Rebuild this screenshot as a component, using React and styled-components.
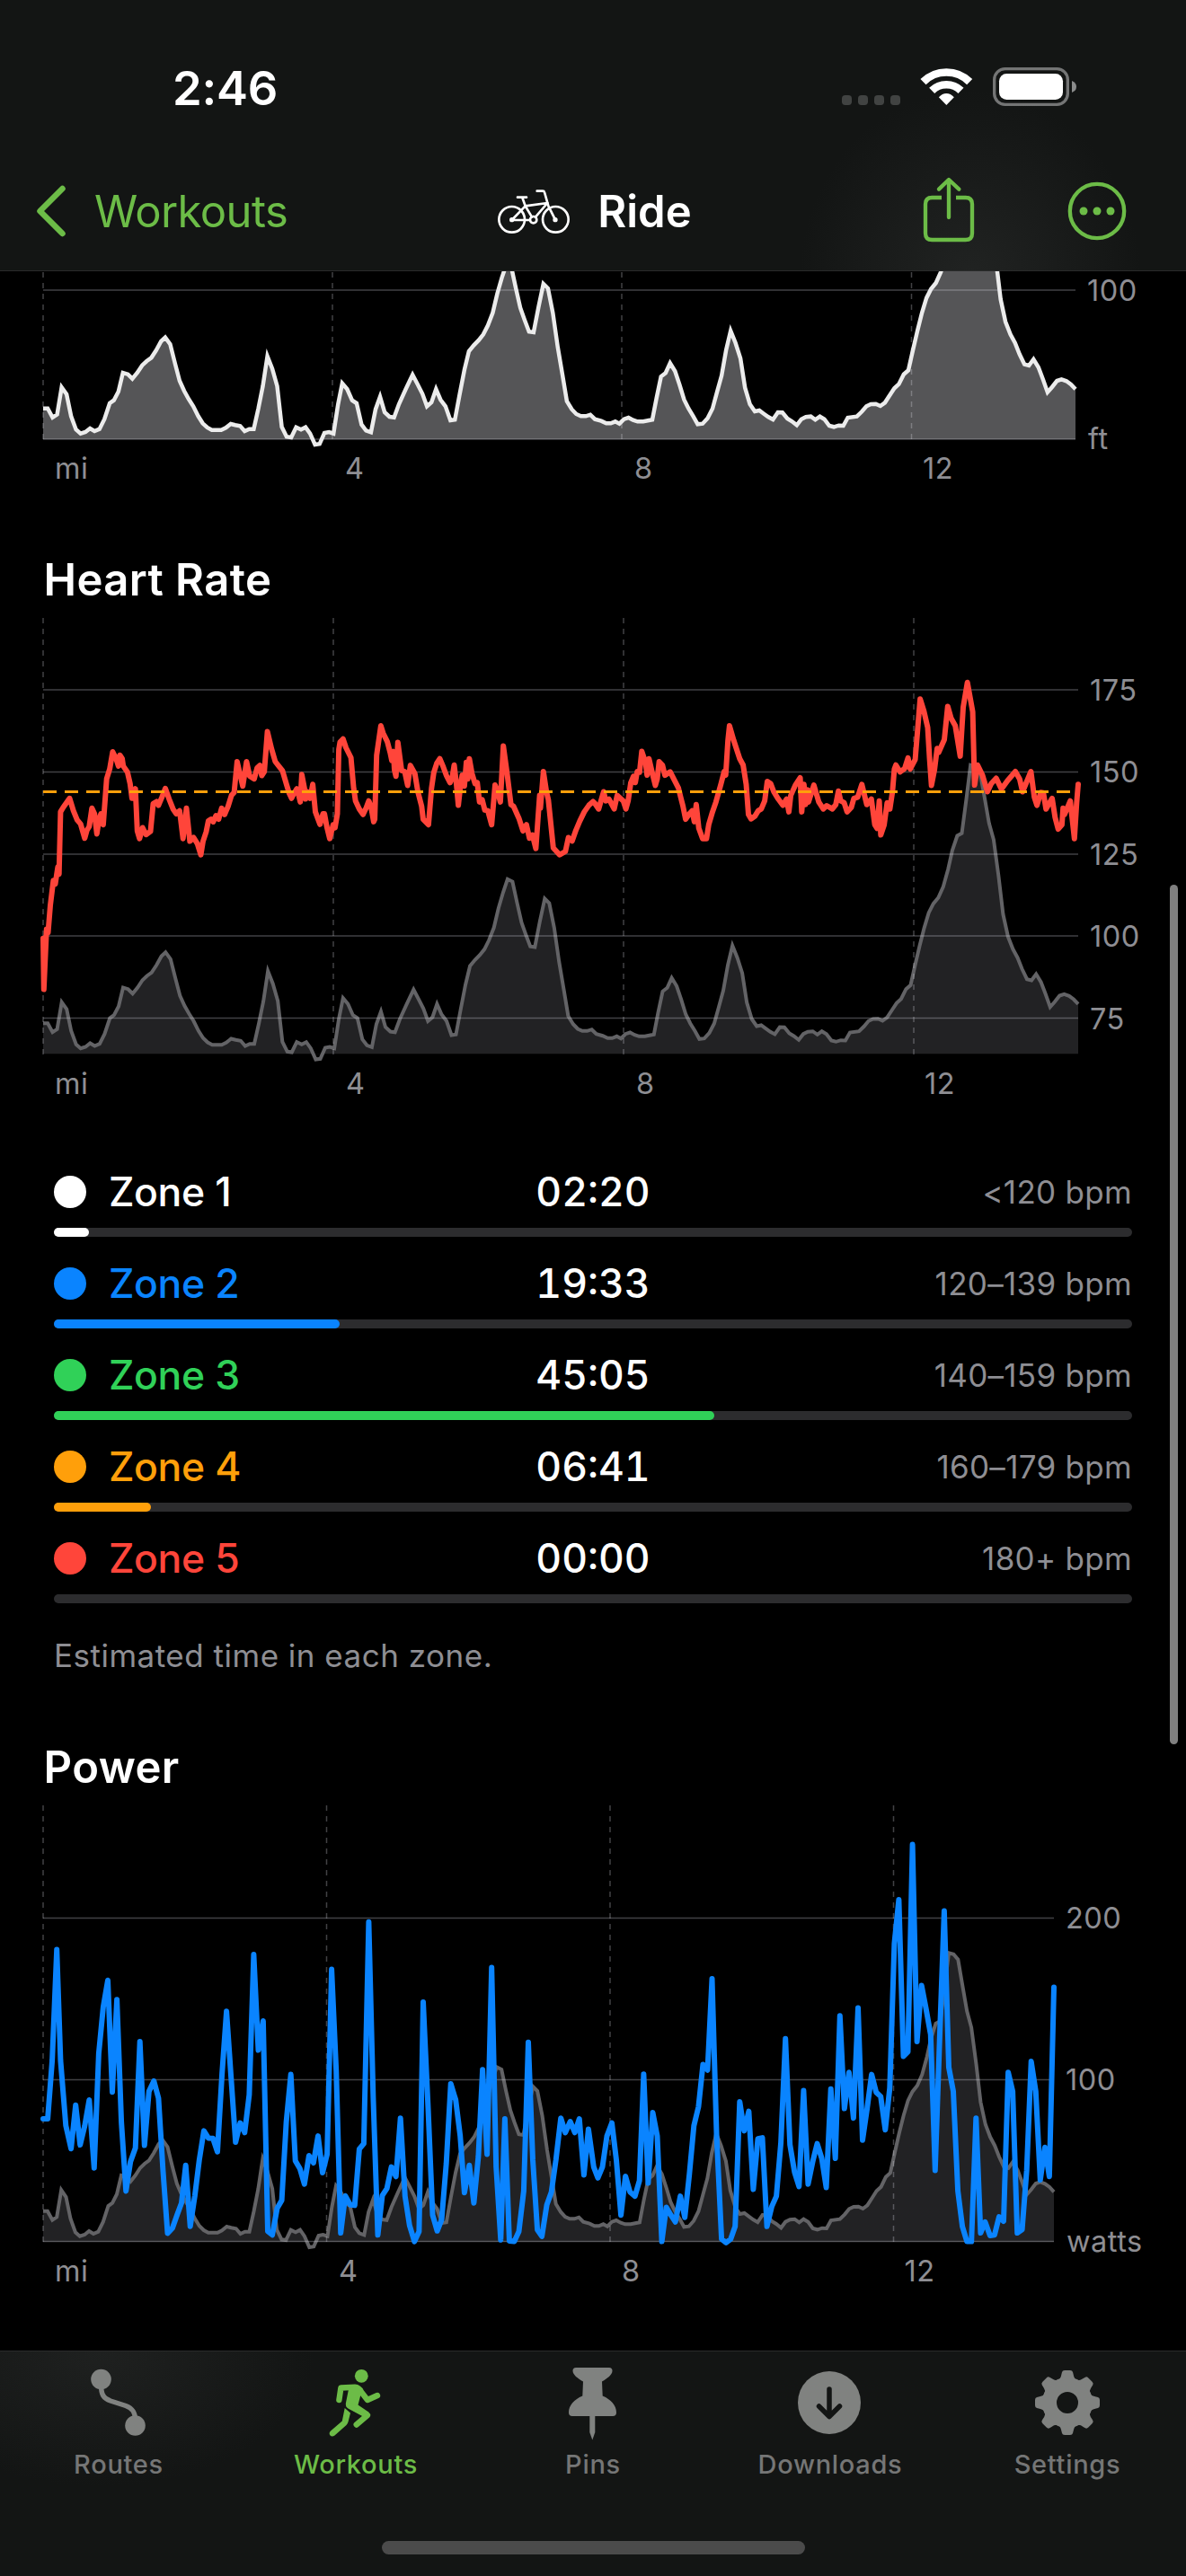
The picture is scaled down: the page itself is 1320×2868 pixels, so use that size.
import React from 'react'
import styled, { createGlobalStyle } from 'styled-components'

const GlobalStyle = createGlobalStyle`
  * {
    box-sizing: border-box;
  }

  body {
    margin: 0;
    background: #000;
  }
`

const GREEN = '#6cbc47'
const GREY = '#8e8e93'

const ELEVATION = `
114,494 126,494 139,524 151,514 163,424 176,447 188,520 201,565 213,578 226,573 238,561 250,570 263,563
276,530 290,477 301,467 313,438 325,375 338,380 350,395 363,375 376,350 388,336 400,325 413,300 426,270
437,257 450,280 463,345 475,402 487,436 499,463 511,487 524,520 536,544 548,558 560,566 585,566 597,559
610,546 622,550 635,553 647,570 659,563 671,563 683,495 695,420 707,320 720,362 733,420 745,556 758,589
770,591 783,557 796,565 808,557 820,578 833,615 845,613 858,576 870,573 882,578 894,480 905,410 918,430
931,467 943,477 956,548 968,568 981,574 993,497 1005,455 1017,507 1030,522 1042,524 1055,480 1073,430
1091,382 1104,413 1117,445 1129,487 1141,474 1153,430 1165,465 1178,487 1191,534 1203,532 1215,450
1228,365 1240,303 1253,283 1266,266 1278,247 1290,217 1303,175 1315,110 1327,58 1339,13 1352,21 1364,92
1376,158 1387,198 1399,238 1411,240 1424,155 1437,78 1449,93 1462,175 1475,290 1487,380 1499,470
1512,497 1524,513 1536,520 1549,520 1561,515 1573,530 1590,536 1603,544 1615,544 1627,538 1638,545
1650,530 1662,525 1674,533 1686,538 1701,538 1725,532 1736,460 1748,388 1760,376 1772,343 1785,370
1797,415 1809,465 1821,495 1833,520 1845,547 1858,545 1871,527 1884,495 1896,440 1908,385 1920,300
1932,235 1945,275 1958,327 1970,425 1983,480 1996,504 2008,501 2020,512 2032,523 2044,531 2057,507
2069,508 2082,528 2094,537 2107,550 2119,530 2131,523 2144,521 2156,532 2168,521 2180,530 2193,552
2205,556 2218,551 2230,552 2242,525 2266,521 2279,505 2291,487 2303,480 2316,479 2328,486 2340,475
2353,450 2365,427 2377,413 2390,380 2402,367 2414,300 2426,235 2438,175 2450,125 2462,95 2475,75
2488,38 2501,-21 2512,-83 2525,-132 2537,-140 2549,-254 2560,-368 2573,-364 2585,-346 2597,-260
2609,-174 2621,-119 2634,3 2646,130 2659,205 2672,247 2684,275 2696,313 2709,347 2721,351 2733,330
2746,357 2758,397 2770,440 2782,423 2795,402 2807,397 2820,403 2832,414 2844,430`

const HEART_RATE = `
114,1090 116,1229 123,1065 127,1075 133,1000 141,932 146,942 153,895 156,915 160,745 167,733 184,708
194,742 204,767 213,778 224,817 230,795 236,785 243,735 250,750 256,805 262,765 267,750 273,780 282,655
290,628 298,581 307,600 313,620 317,590 323,600 326,620 337,637 344,668 349,708 358,682 363,797 369,818
377,788 386,807 398,798 405,723 414,717 419,727 428,705 437,681 447,710 458,738 466,750 475,742 484,818
493,735 502,825 512,815 522,832 531,862 537,825 545,800 551,770 558,765 564,772 571,755 578,765 586,735
594,752 603,730 612,700 619,692 627,608 634,640 642,675 652,608 660,647 672,655 680,625 687,618 692,646
699,635 707,526 718,573 728,608 747,633 758,672 765,695 771,708 777,695 785,682 790,700 794,718 798,643
805,680 808,710 812,690 820,708 827,670 834,745 846,779 854,750 858,750 864,785 872,818 881,780 886,788
892,750 896,575 899,555 907,546 915,570 928,597 935,680 940,715 950,737 960,752 968,735 975,715 981,730
988,772 991,765 996,590 1007,510 1013,530 1024,553 1032,585 1036,605 1040,580 1043,630 1047,648
1052,555 1062,632 1070,635 1078,673 1085,618 1097,640 1105,690 1115,730 1119,765 1133,780 1141,680
1147,638 1155,612 1163,600 1172,622 1180,645 1190,665 1196,650 1201,617 1207,670 1212,727 1218,670
1222,645 1228,675 1233,610 1237,655 1241,600 1248,640 1256,668 1262,665 1268,718 1275,712 1282,740
1290,742 1300,780 1309,672 1316,690 1323,718 1331,565 1341,640 1351,725 1358,730 1372,762 1383,797
1392,780 1400,817 1408,808 1417,845 1427,700 1429,735 1437,635 1445,690 1450,712 1463,843 1480,862
1495,853 1503,815 1513,824 1523,795 1533,770 1545,745 1557,727 1568,717 1573,722 1583,737 1596,690
1602,715 1610,710 1624,737 1632,700 1648,715 1655,737 1661,715 1668,665 1675,648 1680,665 1685,635
1691,637 1697,580 1702,595 1707,610 1711,645 1716,600 1725,640 1733,673 1738,655 1743,608 1752,618
1758,645 1772,636 1783,658 1794,680 1800,705 1806,730 1813,765 1823,750 1830,742 1836,772 1841,725
1848,790 1858,818 1868,818 1874,780 1884,745 1893,718 1906,670 1915,635 1919,645 1925,550 1929,510
1940,550 1956,600 1965,617 1973,670 1979,752 1986,764 1996,757 2005,742 2013,737 2022,715 2029,662
2038,668 2046,690 2058,710 2070,727 2080,710 2086,745 2091,700 2103,672 2116,652 2120,745 2126,670
2130,725 2136,685 2138,718 2152,672 2165,718 2177,737 2186,728 2201,737 2210,725 2217,688 2223,715
2232,720 2240,745 2251,733 2258,708 2268,705 2279,670 2292,725 2304,710 2313,780 2319,790 2325,715
2329,808 2338,780 2346,720 2353,737 2360,690 2365,628 2369,617 2380,636 2392,627 2401,598 2407,628
2420,602 2433,437 2443,470 2453,515 2458,600 2463,673 2471,630 2478,572 2482,583 2497,548 2506,457
2515,490 2526,510 2539,593 2547,460 2558,392 2572,472 2577,672 2585,617 2598,645 2611,690 2621,668
2634,653 2648,683 2664,660 2685,635 2696,655 2704,690 2726,635 2735,705 2742,727 2752,692 2759,693
2766,737 2782,708 2790,760 2798,792 2808,780 2811,735 2815,752 2830,715 2841,818 2847,720 2851,670`

const POWER = `
114,990 126,990 138,820 150,497 160,820 174,1010 188,1077 200,950 212,1066 224,1010 236,935 249,1133
261,800 273,665 285,587 297,912 309,643 321,1000 333,1200 345,1115 358,1075 370,765 382,1067 394,910
407,880 419,930 431,1140 443,1323 456,1308 468,1270 480,1235 491,1125 503,1303 515,1215 527,1110
539,1025 551,1046 563,1047 575,1086 587,860 599,677 611,870 623,1058 635,1002 647,1030 659,920 671,512
683,790 696,705 708,1317 720,1328 733,1250 745,1227 757,1000 769,861 781,1112 793,1135 805,1180
817,1097 829,1118 841,1040 853,1147 865,1093 877,555 889,850 901,1322 913,1214 926,1240 938,1242
950,1078 962,1062 975,417 987,930 999,1328 1011,1213 1023,1193 1035,1130 1047,1158 1059,988 1071,1215
1083,1300 1096,1347 1108,1318 1119,650 1132,960 1144,1270 1156,1316 1168,1283 1180,1120 1192,888
1205,935 1217,1040 1228,1205 1241,1125 1253,1235 1265,1100 1276,847 1288,1093 1300,550 1312,1130
1324,1342 1335,990 1347,1345 1360,1347 1372,1318 1385,1200 1397,767 1409,1110 1421,1313 1433,1332
1446,1240 1458,1203 1470,1110 1483,988 1495,1030 1508,998 1520,1030 1532,990 1544,1153 1556,1020
1570,1130 1581,1162 1593,1130 1605,1040 1618,1002 1630,1110 1642,1270 1654,1157 1666,1203 1679,1215
1691,1170 1702,860 1714,1177 1726,972 1738,1040 1750,1347 1762,1247 1774,1270 1786,1290 1799,1215
1811,1277 1823,1150 1835,1010 1847,955 1859,832 1871,848 1883,582 1895,1040 1908,1340 1920,1350
1932,1340 1944,1303 1956,940 1968,1025 1980,968 1992,1195 2004,1048 2016,1045 2028,1303 2041,1245
2053,1215 2065,1060 2077,757 2089,1065 2101,1145 2113,1187 2125,908 2137,1180 2149,1115 2161,1062
2173,1105 2185,1190 2197,903 2209,1105 2221,690 2233,960 2245,855 2257,988 2269,667 2281,1052 2293,960
2305,861 2317,913 2329,925 2341,1022 2353,900 2365,480 2377,352 2389,808 2401,795 2413,192 2425,765
2437,602 2449,670 2461,745 2473,1140 2485,750 2497,385 2509,840 2521,910 2533,1200 2545,1303 2557,1347
2569,1347 2581,988 2593,1322 2605,1290 2618,1330 2630,1328 2642,1275 2654,1288 2666,855 2678,910
2690,1322 2703,1312 2715,1140 2727,823 2739,910 2751,1168 2763,1073 2775,1158 2787,607`

const LEFT = 48

// Turns a sample list into polyline points: `right` is the pixel of the last
// sample, `zero` the sample value that falls on pixel `base`.
const plot = (samples, { right, base, zero, unit }) => {
  const pairs = samples.trim().split(/\s+/).map((p) => p.split(',').map(Number))
  const first = pairs[0][0]
  const last = pairs[pairs.length - 1][0]
  return pairs
    .map(([x, y]) => {
      const px = LEFT + ((x - first) * (right - LEFT)) / (last - first)
      const py = base + (y - zero) / unit
      return `${px.toFixed(1)},${py.toFixed(1)}`
    })
    .join(' ')
}

const Screen = styled.div`
  position: relative;
  display: flex;
  flex-direction: column;
  width: 1320px;
  height: 2868px;
  overflow: hidden;
  background: #000;
  color: #fff;
  font-family: Inter, 'Liberation Sans', sans-serif;
`

const Header = styled.header`
  flex: none;
  height: 302px;
  border-bottom: 1px solid #2a2b2b;
  background: radial-gradient(ellipse 190px 210px at 1080px 310px, #212322, rgba(33, 35, 34, 0)), #131514;
`

const StatusBar = styled.div`
  display: flex;
  align-items: center;
  justify-content: space-between;
  height: 196px;
  padding: 0 121px 0 192px;
`

const Time = styled.div`
  font-size: 52.5px;
  font-weight: 600;
  letter-spacing: -0.2px;
`

const StatusIcons = styled.div`
  display: flex;
  align-items: flex-start;
  height: 46px;
`

const NavBar = styled.nav`
  display: grid;
  grid-template-columns: 1fr auto 1fr;
  align-items: center;
  height: 78px;
  padding: 0 66px 0 38px;
`

const Back = styled.a`
  display: flex;
  align-items: center;
  gap: 31px;
  color: ${GREEN};
  font-size: 49px;
  letter-spacing: -0.6px;
`

const NavTitle = styled.h1`
  display: flex;
  align-items: center;
  gap: 28px;
  margin: 0 0 0 31px;
  font-size: 49px;
  font-weight: 600;
`

const Actions = styled.div`
  display: flex;
  align-items: center;
  justify-content: flex-end;
  gap: 102px;
`

const Content = styled.main`
  flex: 1;
  min-height: 0;
`

const SectionTitle = styled.h2`
  height: 60px;
  margin: 0;
  padding-left: 48.5px;
  font-size: 49px;
  line-height: 60px;
  font-weight: 600;
  letter-spacing: 0.4px;
`

const Plot = styled.svg`
  display: block;
`

const Label = styled.text`
  fill: ${GREY};
  font-size: 32.5px;
  letter-spacing: 0.5px;
`

const Zones = styled.section`
  display: flex;
  flex-direction: column;
  padding: 0 60px;
`

const Zone = styled.div`
  height: 102px;
`

const ZoneRow = styled.div`
  display: grid;
  grid-template-columns: 1fr auto 1fr;
  align-items: center;
  height: 80px;
`

const ZoneName = styled.div`
  display: flex;
  align-items: center;
  gap: 25px;
  color: ${({ $color }) => $color};
  font-size: 44.5px;
  font-weight: 500;
  letter-spacing: -0.4px;
`

const Dot = styled.span`
  width: 36px;
  height: 36px;
  border-radius: 50%;
  background: ${({ $color }) => $color};
`

const ZoneTime = styled.div`
  font-size: 44.5px;
  font-weight: 500;
  font-variant-numeric: tabular-nums;
`

const ZoneRange = styled.div`
  color: ${GREY};
  font-size: 35px;
  letter-spacing: 0.3px;
  text-align: right;
`

const Track = styled.div`
  height: 10px;
  border-radius: 5px;
  background: #2c2c2e;
`

const Fill = styled.div`
  height: 10px;
  border-radius: 5px;
  background: ${({ $color }) => $color};
`

const Note = styled.p`
  margin: 16px 0 0;
  height: 60px;
  color: ${GREY};
  font-size: 35px;
  line-height: 60px;
  letter-spacing: 0.5px;
`

const ScrollThumb = styled.div`
  position: absolute;
  top: 985px;
  right: 9px;
  width: 9px;
  height: 957px;
  border-radius: 5px;
  background: #808080;
`

const PowerWrap = styled.section`
  padding-top: 65px;
`

const TabBar = styled.footer`
  flex: none;
  display: flex;
  flex-direction: column;
  align-items: center;
  justify-content: space-between;
  height: 251px;
  padding-bottom: 24px;
  border-top: 1px solid #2a2b2b;
  background: radial-gradient(ellipse 240px 150px at 110px 0, #1f2120, rgba(31, 33, 32, 0)), #131514;
`

const Tabs = styled.div`
  display: grid;
  grid-template-columns: repeat(5, 1fr);
  width: 100%;
`

const Tab = styled.div`
  display: flex;
  flex-direction: column;
  align-items: center;
  padding-top: 12px;
  color: ${({ $active }) => ($active ? GREEN : '#808280')};
`

const TabLabel = styled.span`
  margin-top: 6px;
  color: ${({ $active }) => ($active ? GREEN : '#757676')};
  font-size: 29px;
  line-height: 36px;
  font-weight: 500;
  letter-spacing: 0.7px;
`

const HomeIndicator = styled.div`
  width: 471px;
  height: 15px;
  border-radius: 8px;
  background: #4b4b4b;
`

const SignalDots = () => (
  <svg width='76' height='46' viewBox='111 75 228 138'>
    {[111, 165, 219, 273].map((x) => (
      <rect key={x} x={x} y='168' width='33' height='33' rx='11' fill='#414342' />
    ))}
  </svg>
)

const Wifi = () => (
  <svg width='92' height='46' viewBox='339 75 276 138' fill='none' stroke='#fff' strokeWidth='26'>
    <path d='M382.5 123.500 A110 110 0 0 1 537.500 123.500' />
    <path d='M411.500 152.500 A69.500 69.500 0 0 1 508.500 152.500' />
    <path d='M460 201 L434.500 175 Q446 162 460 162 Q474 162 485.500 175 Z' fill='#fff' stroke='none' />
  </svg>
)

const Battery = () => (
  <svg width='94' height='46' viewBox='615 75 282 138'>
    <rect x='620' y='80' width='245' height='119' rx='36' fill='none' stroke='#747575' strokeWidth='10' />
    <rect x='636' y='96' width='213' height='87' rx='25' fill='#fff' />
    <path d='M879 120 Q894 126 894 139.500 Q894 153 879 159 Z' fill='#8b8c8c' />
  </svg>
)

const Chevron = () => (
  <svg width='36' height='60' viewBox='0 0 36 60' fill='none' stroke={GREEN} strokeWidth='6.500' strokeLinecap='round' strokeLinejoin='round'>
    <path d='M31.500 5 L6.500 30 L31.500 55' />
  </svg>
)

const Bike = () => (
  <svg width='84' height='54' viewBox='27 42 252 162' fill='none' stroke='#fff' strokeWidth='8' strokeLinecap='round' strokeLinejoin='round'>
    <circle cx='77' cy='151' r='43' />
    <circle cx='223' cy='151' r='43' />
    <circle cx='149' cy='152' r='11' />
    <circle cx='77' cy='152' r='5' fill='#fff' strokeWidth='6' />
    <circle cx='222' cy='152' r='5' fill='#fff' strokeWidth='6' />
    <path d='M96 77 H126 M112 78 L122 106 L144 143 M137 153 H77 L122 106 L196 96 L156 143' />
    <path d='M161 56 H180 Q185 56 186 60 L199 106 L222 152' />
  </svg>
)

const Share = () => (
  <svg width='60' height='78' viewBox='378 438 180 234' fill='none' stroke={GREEN} strokeWidth='13' strokeLinecap='round' strokeLinejoin='round'>
    <path d='M444 510 H412 Q390 510 390 532 V629 Q390 651 412 651 H524 Q546 651 546 629 V532 Q546 510 524 510 H492' strokeLinecap='butt' />
    <path d='M468 452 V576 M435 482 L468 450 L502 482' />
  </svg>
)

const More = () => (
  <svg width='66' height='66' viewBox='865 454 198 198' fill={GREEN}>
    <circle cx='964' cy='553' r='90.500' fill='none' stroke={GREEN} strokeWidth='13' />
    <circle cx='919' cy='553' r='13.500' />
    <circle cx='964' cy='553' r='13.500' />
    <circle cx='1009' cy='553' r='13.500' />
  </svg>
)

const RouteIcon = () => (
  <svg width='80' height='90' viewBox='0 0 80 90' fill='currentColor'>
    <circle cx='20.500' cy='19' r='11.300' />
    <circle cx='58.500' cy='70.500' r='11.300' />
    <path d='M20.500 25 C20.500 36 23 40 31 43 L48 48.500 C56 51.500 58.500 56 58.500 64' fill='none' stroke='currentColor' strokeWidth='5.500' />
  </svg>
)

const RunnerIcon = () => (
  <svg width='72' height='90' viewBox='0 0 72 90' fill='none' stroke='currentColor' strokeWidth='6.400' strokeLinecap='round' strokeLinejoin='round'>
    <circle cx='42.300' cy='15.300' r='7.400' fill='currentColor' stroke='none' />
    <path d='M17.400 42 L19.400 28.500 L35 27.800 Q39.500 28 42 33 L49 42 L60 37' />
    <path d='M28 30 L38 26 L43 32 L41 38 L38.500 47.500 L51 56 L46 61.500 L27.500 51.500 Q24 48.500 25 45 Z' fill='currentColor' stroke='none' />
    <path d='M28.500 48 L49 59 L36.700 69.500' />
    <path d='M23.700 51 L30 56.500 L27.500 66.500 Q27 68 25.500 70 L12.500 81.500 Q9.500 83.500 7.500 81.500 Q5.500 79 8 76.500 L20.800 65.500 Z' fill='currentColor' stroke='none' />
  </svg>
)

const PinIcon = () => (
  <svg width='80' height='90' viewBox='0 0 80 90' fill='currentColor'>
    <path d='M21 6 H58 Q61.500 6 61.500 9.500 C61.500 14 56 18 50 21.500 L50.700 37.500 C60 41.500 66 48 66 56 Q66 60 62 60 H17 Q13 60 13 56 C13 48 19 41.500 28.300 37.500 L29 21.500 C23 18 17.500 14 17.500 9.500 Q17.500 6 21 6 Z' />
    <path d='M36.300 59 H42.300 V78 L39.300 86.500 L36.300 78 Z' />
  </svg>
)

const DownloadIcon = () => (
  <svg width='80' height='90' viewBox='0 0 80 90'>
    <circle cx='39' cy='45' r='35' fill='currentColor' />
    <path d='M39 30 V60 M27.500 49 L39 60.500 L50.500 49' fill='none' stroke='#131514' strokeWidth='5.500' strokeLinecap='round' strokeLinejoin='round' />
  </svg>
)

const GearIcon = () => (
  <svg width='80' height='90' viewBox='0 0 80 90' fill='currentColor'>
    <circle cx='40' cy='45' r='20' fill='none' stroke='currentColor' strokeWidth='16' />
    {[0, 45, 90, 135, 180, 225, 270, 315].map((angle) => (
      <path
        key={angle}
        d='M29 20 Q32.500 19 33.500 13 L34 11 Q34.500 9 37 9 H43 Q45.500 9 46 11 L46.500 13 Q47.500 19 51 20 Z'
        transform={`rotate(${angle} 40 45)`}
      />
    ))}
  </svg>
)

const Grid = ({ rows, columns, right, top, bottom }) => (
  <g stroke='#ebebf5' strokeOpacity='0.28'>
    {rows.map((y) => (
      <line key={y} x1={LEFT} x2={right} y1={y} y2={y} strokeWidth='1.500' />
    ))}
    {columns.map((x) => (
      <line key={x} x1={x} x2={x} y1={top} y2={bottom} strokeWidth='1.500' strokeDasharray='6 6' />
    ))}
  </g>
)

const Elevation = ({ right, base, stroke, fill, width }) => {
  const points = plot(ELEVATION, { right, base, zero: 597, unit: 3 })
  const id = `area-${right}`
  return (
    <g>
      <clipPath id={id}>
        <rect x={LEFT} y={base - 400} width={right - LEFT} height='400' />
      </clipPath>
      <polygon points={`${LEFT},${base} ${points} ${right},${base}`} fill={fill} clipPath={`url(#${id})`} />
      <polyline points={points} fill='none' stroke={stroke} strokeWidth={width} />
    </g>
  )
}

const MileLabels = ({ xs, y }) => (
  <>
    {['mi', '4', '8', '12'].map((mile, i) => (
      <Label key={mile} x={xs[i]} y={y}>{mile}</Label>
    ))}
  </>
)

const ElevationChart = () => (
  <Plot width='1320' height='314' viewBox='0 302 1320 314'>
    <Elevation right={1197} base={489} stroke='#ececec' fill='#555557' width={4.5} />
    <Grid rows={[323, 489]} columns={[48, 370, 692, 1014.5]} right={1197} top={303} bottom={489} />
    <Label x='1210' y='335'>100</Label>
    <Label x='1211' y='500'>ft</Label>
    <MileLabels xs={[61, 384, 706, 1027]} y={533} />
  </Plot>
)

const HeartRateChart = () => (
  <Plot width='1320' height='611' viewBox='0 676 1320 611'>
    <Elevation right={1200} base={1173.5} stroke='#636366' fill='#222224' width={4} />
    <Grid
      rows={[768, 859.5, 951, 1042, 1133.5]}
      columns={[48, 371, 694, 1017]}
      right={1200}
      top={688}
      bottom={1174}
    />
    <polyline
      points={plot(HEART_RATE, { right: 1200, base: 768, zero: 412, unit: 2.45 })}
      fill='none'
      stroke='#ff453a'
      strokeWidth='6'
      strokeLinecap='round'
      strokeLinejoin='round'
    />
    <line x1={LEFT} x2='1200' y1='881.500' y2='881.500' stroke='#ff9f0a' strokeWidth='3' strokeDasharray='15 9' />
    {[175, 150, 125, 100, 75].map((bpm, i) => (
      <Label key={bpm} x='1213' y={780 + i * 91.4}>{bpm}</Label>
    ))}
    <MileLabels xs={[61, 385, 708, 1029]} y={1217.5} />
  </Plot>
)

const PowerChart = () => (
  <Plot width='1320' height='600' viewBox='0 1998 1320 600'>
    <Elevation right={1173} base={2496} stroke='#636366' fill='#222224' width={4} />
    <Grid
      rows={[2135.5, 2315.5, 2495.5]}
      columns={[48, 363.5, 679, 994.5]}
      right={1173}
      top={2010}
      bottom={2496}
    />
    <polyline
      points={plot(POWER, { right: 1173, base: 2496, zero: 1348, unit: 2.6133 })}
      fill='none'
      stroke='#0a84ff'
      strokeWidth='6'
      strokeLinecap='round'
      strokeLinejoin='round'
    />
    <Label x='1186' y='2147'>200</Label>
    <Label x='1186' y='2327'>100</Label>
    <Label x='1187' y='2507'>watts</Label>
    <MileLabels xs={[61, 377, 692, 1006.5]} y={2540} />
  </Plot>
)

const ZONES = [
  { name: 'Zone 1', time: '02:20', range: '<120 bpm', color: '#ffffff', width: 39 },
  { name: 'Zone 2', time: '19:33', range: '120–139 bpm', color: '#0a84ff', width: 318 },
  { name: 'Zone 3', time: '45:05', range: '140–159 bpm', color: '#30d158', width: 735 },
  { name: 'Zone 4', time: '06:41', range: '160–179 bpm', color: '#ff9f0a', width: 108 },
  { name: 'Zone 5', time: '00:00', range: '180+ bpm', color: '#ff453a', width: 0 }
]

const TABS = [
  { name: 'Routes', Icon: RouteIcon },
  { name: 'Workouts', Icon: RunnerIcon, active: true },
  { name: 'Pins', Icon: PinIcon },
  { name: 'Downloads', Icon: DownloadIcon },
  { name: 'Settings', Icon: GearIcon }
]

const App = () => (
  <Screen>
    <GlobalStyle />
    <Header>
      <StatusBar>
        <Time>2:46</Time>
        <StatusIcons>
          <SignalDots />
          <Wifi />
          <Battery />
        </StatusIcons>
      </StatusBar>
      <NavBar>
        <Back>
          <Chevron />
          Workouts
        </Back>
        <NavTitle>
          <Bike />
          Ride
        </NavTitle>
        <Actions>
          <Share />
          <More />
        </Actions>
      </NavBar>
    </Header>

    <Content>
      <ElevationChart />
      <SectionTitle>Heart Rate</SectionTitle>
      <HeartRateChart />
      <Zones>
        {ZONES.map(({ name, time, range, color, width }) => (
          <Zone key={name}>
            <ZoneRow>
              <ZoneName $color={color}>
                <Dot $color={color} />
                {name}
              </ZoneName>
              <ZoneTime>{time}</ZoneTime>
              <ZoneRange>{range}</ZoneRange>
            </ZoneRow>
            <Track>
              <Fill $color={color} style={{ width }} />
            </Track>
          </Zone>
        ))}
        <Note>Estimated time in each zone.</Note>
      </Zones>
      <PowerWrap>
        <SectionTitle>Power</SectionTitle>
        <PowerChart />
      </PowerWrap>
    </Content>

    <TabBar>
      <Tabs>
        {TABS.map(({ name, Icon, active }) => (
          <Tab key={name} $active={active}>
            <Icon />
            <TabLabel $active={active}>{name}</TabLabel>
          </Tab>
        ))}
      </Tabs>
      <HomeIndicator />
    </TabBar>
    <ScrollThumb />
  </Screen>
)

export default App
